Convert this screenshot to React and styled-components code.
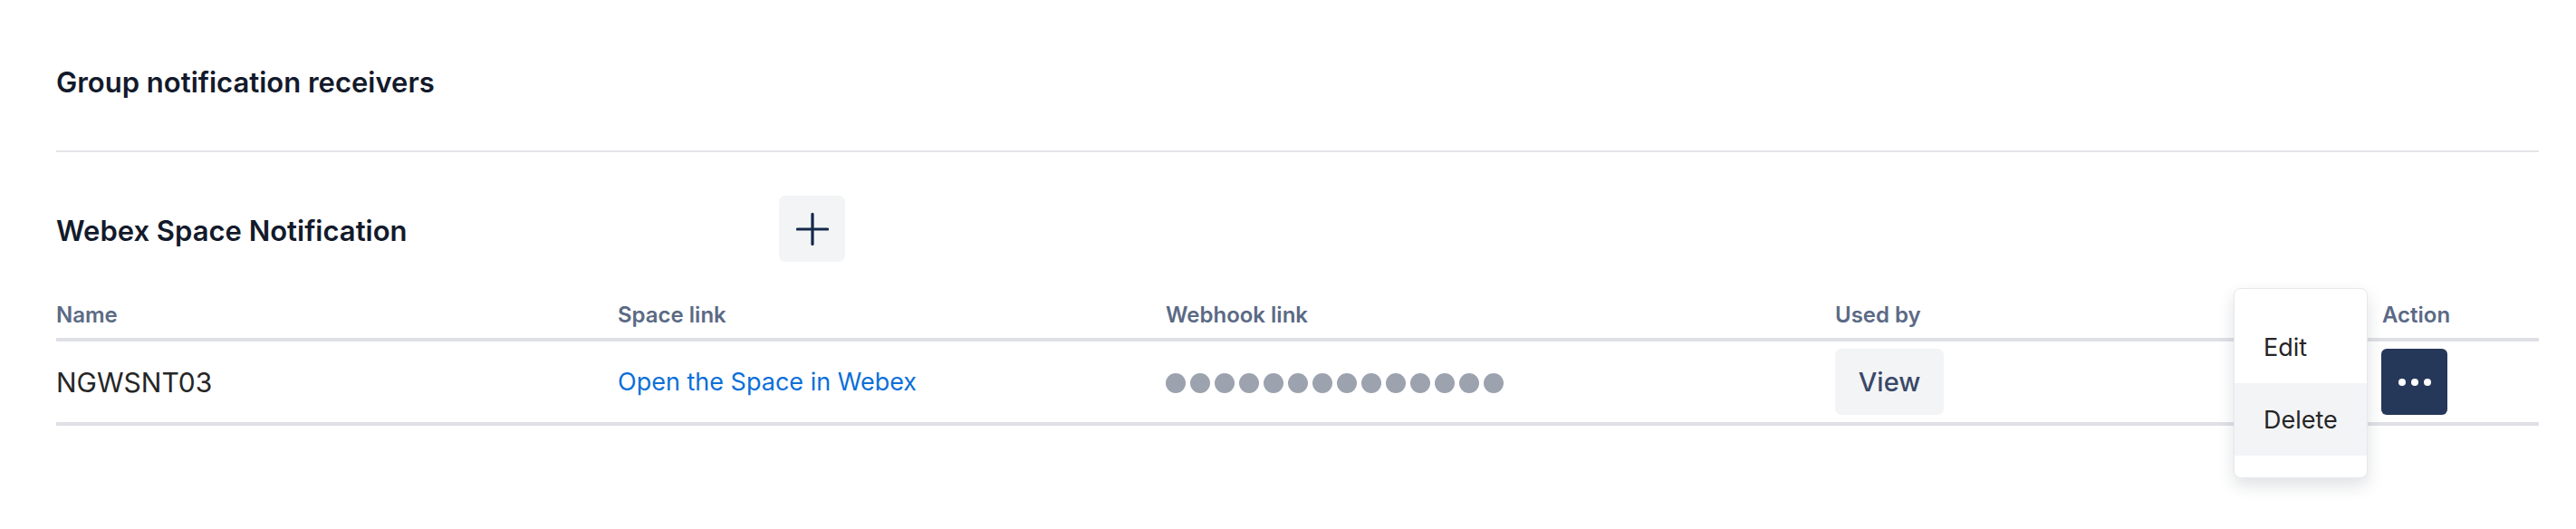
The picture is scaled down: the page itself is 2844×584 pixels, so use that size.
import React from 'react'
import styled, { createGlobalStyle } from 'styled-components'

const GlobalStyle = createGlobalStyle`
  html, body {
    margin: 0;
    background: #fff;
    font-family: Inter, "Noto Sans", "Liberation Sans", sans-serif;
  }
`

const Page = styled.div`
  min-height: 584px;
  box-sizing: border-box;
  padding: 71px 41px 0 62px;
`

const Title = styled.h2`
  margin: 0;
  font-size: 31px;
  line-height: 40px;
  font-weight: 600;
  color: #131a2b;
`

const Divider = styled.hr`
  margin: 55px 0 48px;
  border: 0;
  height: 2px;
  background: #e4e5e8;
`

const SectionHead = styled.div`
  display: flex;
  align-items: center;
`

const SectionTitle = styled.h3`
  width: 798px;
  margin: 0;
  padding-top: 4px;
  font-size: 31px;
  line-height: 36px;
  font-weight: 600;
  color: #131a2b;
`

const IconButton = styled.button`
  width: 73px;
  height: 73px;
  border: 0;
  border-radius: 7px;
  background: #f3f4f6;
  display: flex;
  align-items: center;
  justify-content: center;
  padding: 0;
  color: #15294b;
`

const Table = styled.div`
  display: grid;
  grid-template-columns: 620px 605px 739px 604px 1fr;
`

const HeadCell = styled.div`
  padding: 44px 0 10px;
  font-size: 24px;
  line-height: 30px;
  font-weight: 600;
  color: #5b6a85;
  border-bottom: 4px solid #dfe0e6;
`

const Cell = styled.div`
  height: 89px;
  display: flex;
  align-items: center;
  font-size: 30px;
  color: #262626;
  border-bottom: 4px solid #dfe0e6;
  position: relative;
`

const Link = styled.a`
  font-size: 27px;
  color: #0b6fd8;
  text-decoration: none;
`

const Dots = styled.div`
  display: flex;
  gap: 5px;
  padding-top: 2px;
`

const Dot = styled.span`
  width: 22px;
  height: 22px;
  border-radius: 50%;
  background: #9ca2ae;
`

const ViewButton = styled.button`
  width: 120px;
  height: 73px;
  border: 0;
  border-radius: 7px;
  background: #f3f4f6;
  font-family: inherit;
  font-size: 29px;
  font-weight: 500;
  color: #394868;
`

const MoreButton = styled.button`
  width: 73px;
  height: 73px;
  border: 0;
  border-radius: 6px;
  background: #263859;
  display: flex;
  align-items: center;
  justify-content: center;
  gap: 6px;
  padding: 0;
  margin-left: -1px;

  span {
    width: 8px;
    height: 8px;
    border-radius: 50%;
    background: #fff;
  }
`

const Menu = styled.ul`
  position: absolute;
  top: -67px;
  right: calc(100% + 16px);
  width: 148px;
  margin: 0;
  padding: 24px 0;
  list-style: none;
  background: #fff;
  border: 1px solid #e6e8ec;
  border-radius: 8px;
  box-shadow: 0 8px 18px rgba(30, 40, 60, 0.14);
  box-sizing: border-box;
  overflow: hidden;
  z-index: 2;
`

const MenuItem = styled.li`
  height: 80px;
  display: flex;
  align-items: center;
  padding-left: 32px;
  font-size: 27px;
  color: #262626;
  background: ${(props) => props.active ? '#f3f4f6' : 'transparent'};
`

const ActionWrap = styled.div`
  position: relative;
`

function PlusIcon () {
  return (
    <svg width='36' height='36' viewBox='0 0 36 36' fill='none' stroke='currentColor' strokeWidth='3.2' strokeLinecap='round'>
      <path d='M18 1.5v33M1.5 18h33' />
    </svg>
  )
}

export default function App () {
  return (
    <Page>
      <GlobalStyle />
      <Title>Group notification receivers</Title>
      <Divider />

      <SectionHead>
        <SectionTitle>Webex Space Notification</SectionTitle>
        <IconButton aria-label='Add'><PlusIcon /></IconButton>
      </SectionHead>

      <Table>
        <HeadCell>Name</HeadCell>
        <HeadCell>Space link</HeadCell>
        <HeadCell>Webhook link</HeadCell>
        <HeadCell>Used by</HeadCell>
        <HeadCell>Action</HeadCell>

        <Cell>NGWSNT03</Cell>
        <Cell><Link href='#'>Open the Space in Webex</Link></Cell>
        <Cell>
          <Dots>
            {Array.from({ length: 14 }).map((_, i) => <Dot key={i} />)}
          </Dots>
        </Cell>
        <Cell><ViewButton>View</ViewButton></Cell>
        <Cell>
          <ActionWrap>
            <Menu>
              <MenuItem>Edit</MenuItem>
              <MenuItem active>Delete</MenuItem>
            </Menu>
            <MoreButton aria-label='More'><span /><span /><span /></MoreButton>
          </ActionWrap>
        </Cell>
      </Table>
    </Page>
  )
}
